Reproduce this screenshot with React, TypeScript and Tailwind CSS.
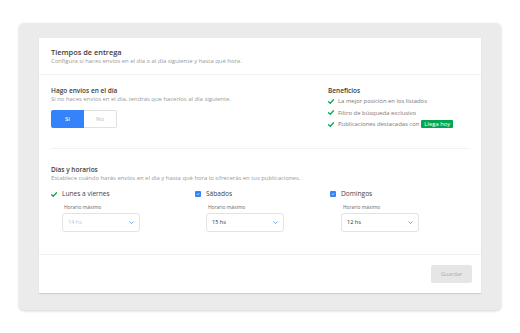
import React from 'react';

const font = { fontFamily: '"Open Sans", Lato, Arial, sans-serif' };

function Check() {
  return (
    <svg width="6" height="5" viewBox="0 0 12 10">
      <path d="M1 5.5 L4.5 8.5 L11 1.5" fill="none" stroke="#00a650" strokeWidth="2.4" strokeLinecap="round" strokeLinejoin="round" />
    </svg>
  );
}

function Box() {
  return (
    <span className="flex h-[6px] w-[6px] items-center justify-center rounded-[1px] bg-[#3483fa]">
      <svg width="4" height="4" viewBox="0 0 10 10">
        <path d="M2 5.2 L4.2 7.4 L8.2 2.8" fill="none" stroke="#fff" strokeWidth="1.6" />
      </svg>
    </span>
  );
}

function Select({ value, disabled }: { value: string; disabled?: boolean }) {
  return (
    <div className="mt-[3px] flex h-[19px] w-[78px] items-center justify-between rounded-[3px] border border-[#e3e3e3] bg-white pl-[5px] pr-[5px]">
      <span className={`text-[5.6px] ${disabled ? 'text-[#c4c4c4]' : 'text-[#333]'}`}>{value}</span>
      <svg width="5" height="3" viewBox="0 0 10 6">
        <path d="M1 1 L5 5 L9 1" fill="none" stroke="#3483fa" strokeWidth="1.4" />
      </svg>
    </div>
  );
}

export default function App() {
  const days = [
    { label: 'Lunes a viernes', value: '14 hs', checked: false, width: 'w-[144px]' },
    { label: 'Sábados', value: '15 hs', checked: true, width: 'w-[135px]' },
    { label: 'Domingos', value: '12 hs', checked: true, width: 'w-[100px]' },
  ];

  return (
    <div className="h-[333px] w-[520px] bg-white pl-[19px] pt-[23px]" style={font}>
      <div className="h-[287px] w-[482px] rounded-[5px] bg-[#ebebeb] pl-[20px] pt-[15px] shadow-[0_1px_3px_rgba(0,0,0,0.18)]">
        <div className="flex h-[255px] w-[442px] flex-col bg-white shadow-[0_1px_1px_rgba(0,0,0,0.12)]">
          {/* Header */}
          <div className="h-[37px] border-b border-[#f2f2f2] px-[12px] pt-[9px]">
            <h1 className="text-[7.4px] font-semibold leading-[10px] text-[#3d3d3d]">Tiempos de entrega</h1>
            <p className="mt-[1px] text-[5.9px] leading-[7px] text-[#999]">
              Configura si haces envíos en el día o al día siguiente y hasta qué hora.
            </p>
          </div>

          {/* Same day */}
          <div className="px-[12px]">
            <div className="flex h-[74px] border-b border-[#f2f2f2] pt-[11px]">
              <div className="w-[277px]">
                <h2 className="text-[6.5px] font-semibold leading-[9px] text-[#3d3d3d]">Hago envíos en el día</h2>
                <p className="mt-[1px] text-[5.9px] leading-[7px] text-[#999]">
                  Si no haces envíos en el día, tendrás que hacerlos al día siguiente.
                </p>
                <div className="mt-[7px] flex h-[18px]">
                  <div className="flex w-[33px] items-center justify-center rounded-l-[2px] bg-[#3483fa] text-[5.8px] font-semibold text-white">
                    Si
                  </div>
                  <div className="flex w-[33px] items-center justify-center rounded-r-[2px] border border-l-0 border-[#e0e0e0] text-[5.8px] text-[#bbb]">
                    No
                  </div>
                </div>
              </div>
              <div>
                <h2 className="text-[6.5px] font-semibold leading-[9px] text-[#3d3d3d]">Beneficios</h2>
                <ul className="mt-[2px] flex flex-col gap-[3.5px] text-[5.9px] leading-[8px] text-[#777]">
                  <li className="flex items-center gap-[4px]">
                    <Check />
                    La mejor posición en los listados
                  </li>
                  <li className="flex items-center gap-[4px]">
                    <Check />
                    Filtro de búsqueda exclusivo
                  </li>
                  <li className="flex items-center gap-[4px]">
                    <Check />
                    Publicaciones destacadas con
                    <span className="-ml-[2px] rounded-[1px] bg-[#00a650] px-[3px] text-white">Llega hoy</span>
                  </li>
                </ul>
              </div>
            </div>
          </div>

          {/* Days and schedules */}
          <div className="h-[106px] border-b border-[#f2f2f2] px-[12px] pt-[16px]">
            <h2 className="text-[6.5px] font-semibold leading-[9px] text-[#3d3d3d]">Días y horarios</h2>
            <p className="mt-[1px] text-[5.9px] leading-[7px] text-[#999]">
              Establece cuándo harás envíos en el día y hasta qué hora lo ofrecerás en tus publicaciones.
            </p>
            <div className="mt-[7px] flex">
              {days.map((d) => (
                <div key={d.label} className={d.width}>
                  <div className="flex h-[10px] items-center gap-[5px]">
                    {d.checked ? <Box /> : <Check />}
                    <span className="text-[6.6px] text-[#444]">{d.label}</span>
                  </div>
                  <div className="mt-[5px] pl-[11px]">
                    <div className="pl-[2px] text-[4.9px] leading-[6px] text-[#666]">Horario máximo</div>
                    <Select value={d.value} disabled={!d.checked} />
                  </div>
                </div>
              ))}
            </div>
          </div>

          {/* Footer */}
          <div className="flex flex-1 items-center justify-end pr-[9px]">
            <button className="h-[18px] w-[41px] rounded-[2px] bg-[#e6e6e6] text-[5.6px] text-[#adadad]">
              Guardar
            </button>
          </div>
        </div>
      </div>
    </div>
  );
}
